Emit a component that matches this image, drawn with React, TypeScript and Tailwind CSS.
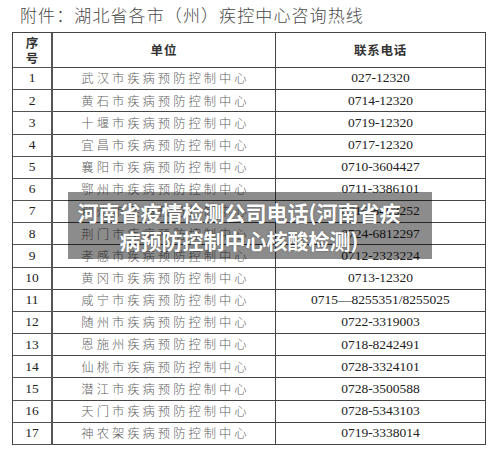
const rows: [string, string, string][] = [
  ['1', '武汉市疾病预防控制中心', '027-12320'],
  ['2', '黄石市疾病预防控制中心', '0714-12320'],
  ['3', '十堰市疾病预防控制中心', '0719-12320'],
  ['4', '宜昌市疾病预防控制中心', '0717-12320'],
  ['5', '襄阳市疾病预防控制中心', '0710-3604427'],
  ['6', '鄂州市疾病预防控制中心', '0711-3386101'],
  ['7', '荆州市疾病预防控制中心', '0716-8463252'],
  ['8', '荆门市疾病预防控制中心', '0724-6812297'],
  ['9', '孝感市疾病预防控制中心', '0712-2323224'],
  ['10', '黄冈市疾病预防控制中心', '0713-12320'],
  ['11', '咸宁市疾病预防控制中心', '0715—8255351/8255025'],
  ['12', '随州市疾病预防控制中心', '0722-3319003'],
  ['13', '恩施州疾病预防控制中心', '0718-8242491'],
  ['14', '仙桃市疾病预防控制中心', '0728-3324101'],
  ['15', '潜江市疾病预防控制中心', '0728-3500588'],
  ['16', '天门市疾病预防控制中心', '0728-5343103'],
  ['17', '神农架疾病预防控制中心', '0719-3338014'],
];

const cjk = "font-['Noto_Sans_CJK_SC',sans-serif]";
const serif = "font-['Liberation_Serif','Noto_Sans_CJK_SC',serif]";

export default function App() {
  return (
    <div className="relative w-[500px] h-[453px] overflow-hidden bg-white">
      {/* Title */}
      <div className={`${cjk} pl-[20px] pt-[3px] h-[32px] text-[17px] leading-[24px] tracking-[1.1px] font-light text-[#4a4a4a]`}>
        附件：湖北省各市（州）疾控中心咨询热线
      </div>

      {/* Table */}
      <div className="ml-[12px] w-[474px] border-l border-t border-[#444] grid grid-cols-[40px_223px_210px]">
        <div className={`${cjk} h-[35px] border-r-2 border-b border-[#555] flex flex-col items-center justify-center text-[12.5px] leading-[15px] font-bold text-[#333]`}>
          <span>序</span>
          <span>号</span>
        </div>
        <div className={`${cjk} h-[35px] border-r border-b border-[#444] flex items-center justify-center text-[12.5px] font-bold tracking-[1px] text-[#333]`}>
          单位
        </div>
        <div className={`${cjk} h-[35px] border-r border-b border-[#444] flex items-center justify-center text-[12.5px] font-bold tracking-[0.8px] text-[#333]`}>
          联系电话
        </div>

        {rows.map(([no, unit, tel]) => (
          <div key={no} className="contents">
            <div className={`${serif} h-[22.18px] border-r-2 border-b border-[#555] flex items-center justify-center text-[13.5px] text-[#222]`}>
              {no}
            </div>
            <div className={`${cjk} h-[22.18px] border-r border-b border-[#444] flex items-center justify-center pl-[3px] text-[12.3px] font-light tracking-[3px] text-[#5f5f5f]`}>
              {unit}
            </div>
            <div className={`${serif} h-[22.18px] border-r border-b border-[#444] flex items-center justify-center text-[13.5px] text-[#222]`}>
              {tel}
            </div>
          </div>
        ))}
      </div>

      {/* Caption overlay */}
      <div className="absolute left-[68px] top-[192px] w-[364px] h-[67px] bg-black/45 flex items-center justify-center pl-[4px] pr-[26px]">
        <p className={`${cjk} text-center text-[21px] leading-[28px] font-bold text-white [text-shadow:0_0_2px_rgba(0,0,0,0.35)]`}>
          河南省疫情检测公司电话(河南省疾病预防控制中心核酸检测)
        </p>
      </div>
    </div>
  );
}
